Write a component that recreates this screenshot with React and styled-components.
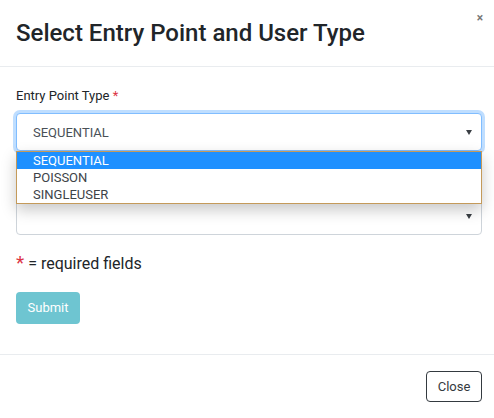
import React from "react";
import styled, { createGlobalStyle } from "styled-components";

const Global = createGlobalStyle`
  html, body { margin: 0; padding: 0; background: #fff; }
  body { font-family: Roboto, "Liberation Sans", sans-serif; color: #212529; }
  * { box-sizing: border-box; }
`;

const Modal = styled.div`
  width: 494px;
  height: 418px;
  overflow: hidden;
  background: #fff;
  display: flex;
  flex-direction: column;
`;

const Header = styled.div`
  position: relative;
  height: 67px;
  padding: 0 16px;
  display: flex;
  align-items: center;
  border-bottom: 1px solid #e9ecef;
`;

const Title = styled.h4`
  margin: 0;
  padding-top: 1px;
  font-size: 24px;
  font-weight: 500;
  color: #212529;
  line-height: 1.2;
`;

const CloseX = styled.span`
  position: absolute;
  right: 11px;
  top: 12px;
  font-size: 12px;
  line-height: 1;
  color: #777;
  font-weight: 700;
`;

const Body = styled.div`
  padding: 16px 12px 0 16px;
  height: 289px;
  border-bottom: 1px solid #e9ecef;
`;

const Group = styled.div`
  position: relative;
  margin-bottom: 16px;
`;

const Label = styled.label`
  display: block;
  height: 22px;
  margin-bottom: 8px;
  padding-top: 3px;
  font-size: 13px;
  line-height: 19px;
  color: #212529;
`;

const Star = styled.span`
  color: #dc3545;
  font-size: ${(p) => (p.$big ? "19px" : "13px")};
`;

const SelectBox = styled.div`
  position: relative;
  height: 38px;
  border: 1px solid ${(p) => (p.$focus ? "#80bdff" : "#ced4da")};
  border-radius: 4px;
  box-shadow: ${(p) => (p.$focus ? "0 0 0 3px rgba(0,123,255,.25)" : "none")};
  background: #fff;
  display: flex;
  align-items: center;
  padding: 1px 16px 0;
  font-size: 13px;
  color: #495057;
`;

const Arrow = styled.span`
  position: absolute;
  right: 9px;
  top: 50%;
  margin-top: -2px;
  width: 0;
  height: 0;
  border-left: 3.5px solid transparent;
  border-right: 3.5px solid transparent;
  border-top: 5px solid #3a3f44;
`;

const List = styled.ul`
  position: absolute;
  z-index: 5;
  left: 0;
  right: 0;
  top: 68px;
  margin: 0;
  padding: 0;
  list-style: none;
  background: #fff;
  border: 1px solid #c49a5a;
  box-shadow: 0 6px 14px rgba(0, 0, 0, 0.22);
`;

const Option = styled.li`
  height: 17px;
  line-height: 17px;
  padding-left: 16px;
  font-size: 13px;
  color: ${(p) => (p.$active ? "#fff" : "#3d4348")};
  background: ${(p) => (p.$active ? "#1e90ff" : "#fff")};
`;

const Note = styled.p`
  margin: 0 0 16px;
  font-size: 16px;
  line-height: 24px;
  color: #212529;
`;

const SubmitBtn = styled.button`
  width: 64px;
  height: 32px;
  border: none;
  border-radius: 4px;
  background: #6ec5d1;
  color: #fff;
  font-family: Roboto, "Liberation Sans", sans-serif;
  font-size: 13px;
  padding: 0;
`;

const Footer = styled.div`
  padding: 16px 12px 16px 16px;
  display: flex;
  justify-content: flex-end;
`;

const CloseBtn = styled.button`
  width: 56px;
  height: 31px;
  border: 1px solid #343a40;
  border-radius: 4px;
  background: #fff;
  color: #343a40;
  font-family: Roboto, "Liberation Sans", sans-serif;
  font-size: 13px;
  padding: 0;
`;

export default function App() {
  const options = ["SEQUENTIAL", "POISSON", "SINGLEUSER"];
  return (
    <>
      <Global />
      <Modal>
        <Header>
          <Title>Select Entry Point and User Type</Title>
          <CloseX>×</CloseX>
        </Header>
        <Body>
          <Group>
            <Label>
              Entry Point Type <Star>*</Star>
            </Label>
            <SelectBox $focus>
              SEQUENTIAL
              <Arrow />
            </SelectBox>
            <List>
              {options.map((o, i) => (
                <Option key={o} $active={i === 0}>
                  {o}
                </Option>
              ))}
            </List>
          </Group>
          <Group>
            <Label>
              User Type <Star>*</Star>
            </Label>
            <SelectBox>
              <Arrow />
            </SelectBox>
          </Group>
          <Note>
            <Star $big>*</Star> = required fields
          </Note>
          <SubmitBtn disabled>Submit</SubmitBtn>
        </Body>
        <Footer>
          <CloseBtn>Close</CloseBtn>
        </Footer>
      </Modal>
    </>
  );
}
